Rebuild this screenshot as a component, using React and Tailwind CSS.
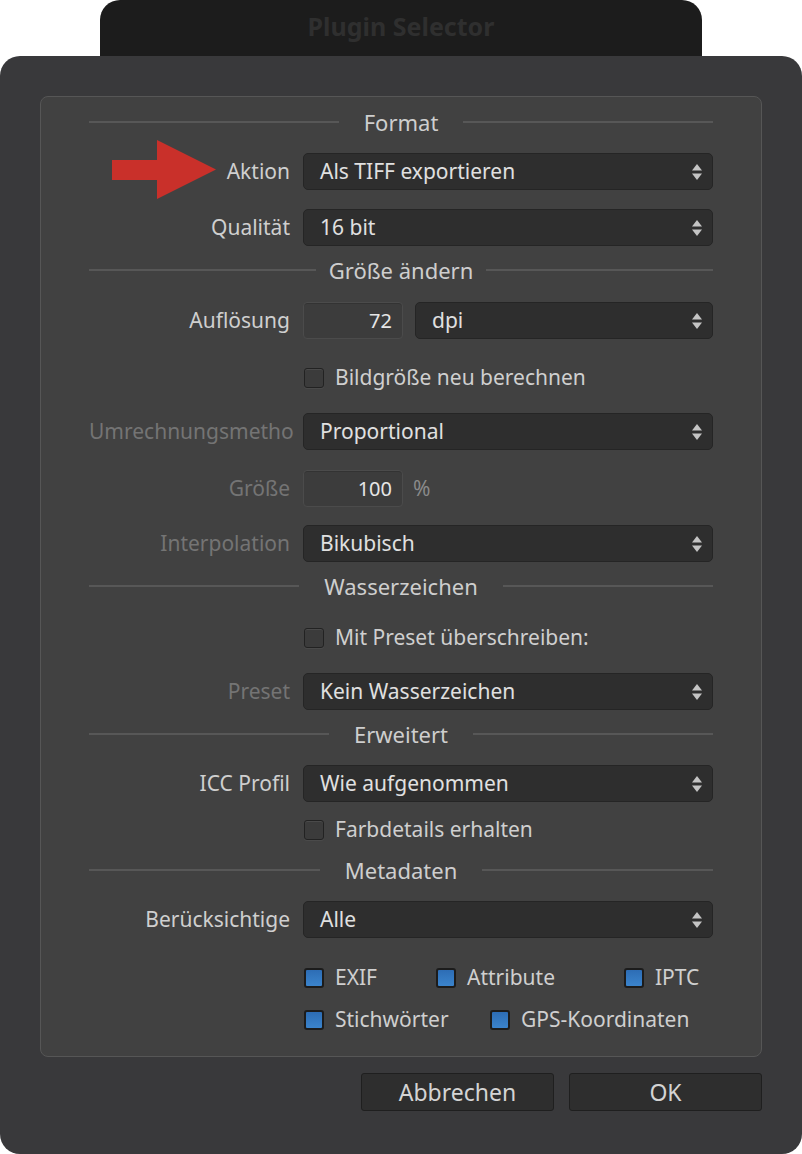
import React from 'react';

const font = { fontFamily: '"Noto Sans", "Liberation Sans", sans-serif' };

const Arrows = () => (
    <svg width="12" height="18" viewBox="0 0 12 18" className="shrink-0">
        <path d="M6 1 L11 7.5 L1 7.5 Z" fill="#c4c4c4" />
        <path d="M6 17 L11 10.5 L1 10.5 Z" fill="#c4c4c4" />
    </svg>
);

const Select = ({ value, className = '' }) => (
    <div className={`h-[37px] flex items-center justify-between pl-[16px] pr-[9px] bg-[#2e2e2e] border border-[#252525] rounded-[5px] text-[21px] text-[#e0e0e0] ${className}`}>
        <span className="leading-normal">{value}</span>
        <Arrows />
    </div>
);

const NumField = ({ value }) => (
    <div className="w-[100px] h-[37px] flex items-center justify-end pr-[10px] bg-[#3c3c3c] border border-[#4b4b4b] rounded-[4px] shadow-[inset_0_1px_0_#333] text-[20px] text-[#e6e6e6] shrink-0">
        <span className="leading-normal">{value}</span>
    </div>
);

const Row = ({ label, dim, mt, children, extra }) => (
    <div className={`relative flex items-center h-[37px] ${mt}`}>
        {extra}
        <div className={`w-[201px] text-right text-[21px] leading-normal whitespace-nowrap ${dim ? 'text-[#747474]' : 'text-[#cfcfcf]'}`}>
            {label}
        </div>
        <div className="ml-[13px] flex-1 flex items-center">{children}</div>
    </div>
);

const Box = ({ checked }) => (
    checked ? (
        <div className="w-[20px] h-[20px] rounded-[3px] border-2 border-[#1c1c1c] bg-gradient-to-b from-[#2d6db5] to-[#3b84cc] shrink-0" />
    ) : (
        <div className="w-[20px] h-[20px] rounded-[3px] border border-[#222] bg-[#3b3b3b] shadow-[inset_0_1px_0_#4a4a4a,0_1px_0_#4a4a4a] shrink-0" />
    )
);

const Check = ({ label, checked, className = '' }) => (
    <div className={`flex items-center ${className}`}>
        <Box checked={checked} />
        <span className="ml-[11px] text-[21px] leading-normal text-[#cfcfcf] whitespace-nowrap">{label}</span>
    </div>
);

const CheckRow = ({ mt, children }) => (
    <div className={`flex items-center h-[24px] pl-[215px] ${mt}`}>{children}</div>
);

const Header = ({ title, mt, gap = 'px-[25px]' }) => (
    <div className={`flex items-center h-[30px] ${mt}`}>
        <div className="flex-1 h-[2px] bg-[#575757]" />
        <span className={`${gap} text-[22px] leading-normal text-[#cecece]`}>{title}</span>
        <div className="flex-1 h-[2px] bg-[#575757]" />
    </div>
);

const RedArrow = () => (
    <svg width="104" height="59" viewBox="0 0 104 59" className="absolute left-[23px] top-[-13px]">
        <path d="M0 20 L45 20 L45 0 L104 29.5 L45 59 L45 40 L0 40 Z" fill="#c9302a" />
    </svg>
);

export default function App() {
    return (
        <div className="w-[802px] h-[1154px] bg-white overflow-hidden" style={font}>
            {/* title tab */}
            <div className="ml-[100px] w-[602px] h-[56px] bg-[#1c1c1c] rounded-t-[20px] flex justify-center pt-[14px]">
                <span className="text-[25px] font-bold leading-none text-[#2f2f2f]">Plugin Selector</span>
            </div>

            {/* main panel */}
            <div className="h-[1098px] bg-[#39393b] rounded-[20px] pt-[40px] px-[40px]">
                <div className="h-[961px] bg-[#414141] border border-[#565656] rounded-[8px] px-[48px] pt-[10px]">

                    <Header title="Format" mt="" />
                    <Row label="Aktion" mt="mt-[16px]" extra={<RedArrow />}>
                        <Select value="Als TIFF exportieren" className="flex-1" />
                    </Row>
                    <Row label="Qualität" mt="mt-[19px]">
                        <Select value="16 bit" className="flex-1" />
                    </Row>

                    <Header title="Größe ändern" mt="mt-[9px]" gap="px-[13px]" />
                    <Row label="Auflösung" mt="mt-[17px]">
                        <NumField value="72" />
                        <Select value="dpi" className="flex-1 ml-[12px]" />
                    </Row>
                    <CheckRow mt="mt-[27px]">
                        <Check label="Bildgröße neu berechnen" />
                    </CheckRow>
                    <Row label="Umrechnungsmetho" dim mt="mt-[23px]">
                        <Select value="Proportional" className="flex-1" />
                    </Row>
                    <Row label="Größe" dim mt="mt-[20px]">
                        <NumField value="100" />
                        <span className="ml-[10px] text-[21px] leading-normal text-[#8a8a8a]">%</span>
                    </Row>
                    <Row label="Interpolation" dim mt="mt-[18px]">
                        <Select value="Bikubisch" className="flex-1" />
                    </Row>

                    <Header title="Wasserzeichen" mt="mt-[9px]" />
                    <CheckRow mt="mt-[25px]">
                        <Check label="Mit Preset überschreiben:" />
                    </CheckRow>
                    <Row label="Preset" dim mt="mt-[23px]">
                        <Select value="Kein Wasserzeichen" className="flex-1" />
                    </Row>

                    <Header title="Erweitert" mt="mt-[9px]" />
                    <Row label="ICC Profil" mt="mt-[16px]">
                        <Select value="Wie aufgenommen" className="flex-1" />
                    </Row>
                    <CheckRow mt="mt-[16px]">
                        <Check label="Farbdetails erhalten" />
                    </CheckRow>

                    <Header title="Metadaten" mt="mt-[13px]" />
                    <Row label="Berücksichtige" mt="mt-[16px]">
                        <Select value="Alle" className="flex-1" />
                    </Row>
                    <CheckRow mt="mt-[28px]">
                        <Check label="EXIF" checked className="w-[132px]" />
                        <Check label="Attribute" checked className="w-[188px]" />
                        <Check label="IPTC" checked />
                    </CheckRow>
                    <CheckRow mt="mt-[18px]">
                        <Check label="Stichwörter" checked className="w-[186px]" />
                        <Check label="GPS-Koordinaten" checked />
                    </CheckRow>
                </div>

                {/* buttons */}
                <div className="mt-[16px] flex justify-end gap-[15px]">
                    <button className="w-[193px] h-[38px] bg-[#2e2e2e] border border-[#1f1f1f] rounded-[3px] text-[23px] leading-none text-[#d4d4d4]">
                        Abbrechen
                    </button>
                    <button className="w-[193px] h-[38px] bg-[#2e2e2e] border border-[#1f1f1f] rounded-[3px] text-[23px] leading-none text-[#d4d4d4]">
                        OK
                    </button>
                </div>
            </div>
        </div>
    );
}
